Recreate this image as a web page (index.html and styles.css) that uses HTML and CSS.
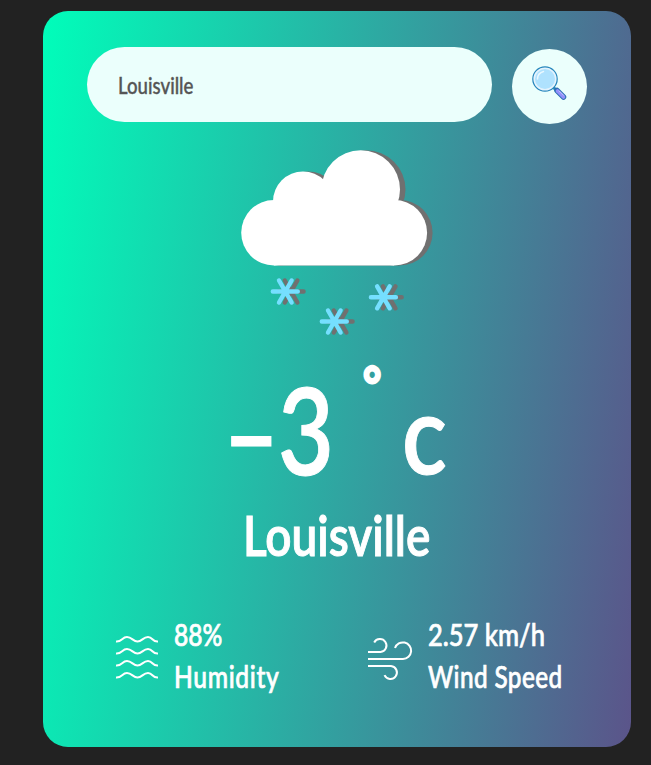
FILE: index.html
```html
<!DOCTYPE html>
<html lang="en">
<head>
<meta charset="utf-8">
<title>Weather</title>
<link rel="stylesheet" href="styles.css">
</head>
<body>
<main class="card">
  <div class="search">
    <div class="field"><span class="field-text">Louisville</span></div>
    <button class="search-btn" aria-label="Search">
      <svg width="36" height="36" viewBox="0 0 36 36">
        <path d="M21.500 22.500l3 3" stroke="#2584b8" stroke-width="3"/>
        <path d="M25 25.500l6.500 6.500" stroke="#2c6fb4" stroke-width="5.500" stroke-linecap="round"/>
        <path d="M25.500 26l6 6" stroke="#9290fa" stroke-width="3.600" stroke-linecap="round"/>
        <path d="M26.800 25.600l5 5" stroke="#c5c5ff" stroke-width="1"/>
        <circle cx="13" cy="14" r="12.200" fill="#e4f3fd" stroke="#2887bd" stroke-width="1.200"/>
        <circle cx="13" cy="14" r="10" fill="#afe2fe"/>
        <path d="M5.500 14a8 8 0 0 1 6-7.500" fill="none" stroke="#e9f8ff" stroke-width="1.500" stroke-linecap="round"/>
      </svg>
    </button>
  </div>

  <svg class="weather-icon" width="220" height="205" viewBox="230 140 220 205">
    <defs>
      <g id="cloud">
        <circle cx="274" cy="232.700" r="32.800"/>
        <circle cx="303" cy="201.500" r="30"/>
        <circle cx="360.700" cy="189.500" r="39.300"/>
        <circle cx="394.300" cy="232.700" r="32.800"/>
        <path d="M273 200h121v65.500H274z"/>
      </g>
      <path id="flake" d="M-12.500 0h25M-6.300-11L6.300 11M6.300-11L-6.300 11"/>
      <g id="flakes" fill="none" stroke-width="4.400" stroke-linecap="round">
        <use href="#flake" x="285.300" y="291.500"/>
        <use href="#flake" x="334.300" y="321.500"/>
        <use href="#flake" x="383.400" y="297.300"/>
      </g>
    </defs>
    <use href="#cloud" x="5.500" fill="#707070"/>
    <use href="#cloud" fill="#fff"/>
    <use href="#flakes" x="5.800" stroke="#707070"/>
    <use href="#flakes" stroke="#75dfff"/>
  </svg>

  <h1 class="temp"><span class="minus">–</span><span class="digit">3</span><span class="degree">°</span><span class="unit">c</span></h1>
  <h2 class="city"><span>Louisville</span></h2>

  <div class="details">
    <div class="stat humidity">
      <svg width="44" height="44" viewBox="0 0 44 44" fill="none" stroke="#fff" stroke-width="2">
        <path id="wave" d="M1 6.500C7 7 7 2 12 2s6 4.500 10.500 4.500S28 2 33 2s4 5 10 4.500"/>
        <use href="#wave" y="12"/><use href="#wave" y="24"/><use href="#wave" y="36"/>
      </svg>
      <div class="lines"><p><span class="t-hum">88%</span></p><p><span class="t-humidity">Humidity</span></p></div>
    </div>
    <div class="stat wind">
      <svg width="46" height="44" viewBox="0 0 46 44" fill="none" stroke="#fff" stroke-width="2">
        <path d="M1 15h12.500a6.500 6.500 0 1 0-6.300-9.500M1 22h35a8.300 8.300 0 1 0-8-11M1 29h23a6.500 6.500 0 1 1-6.500 9.200"/>
      </svg>
      <div class="lines"><p><span class="t-speed">2.57 km/h</span></p><p><span class="t-wind">Wind Speed</span></p></div>
    </div>
  </div>
</main>
</body>
</html>
```
FILE: styles.css
```css
* { box-sizing: border-box; margin: 0; padding: 0; }
body { background: #222; font-family: Lato, sans-serif; color: #fff; overflow: hidden; }
.card {
  width: 588px;
  height: 736px;
  margin: 11px 0 0 43px;
  padding: 36px 44px 0;
  border-radius: 25px;
  background: linear-gradient(97deg, #00feba, #5b548a);
}
.search { display: flex; gap: 20px; height: 77px; }
.field {
  width: 405px;
  height: 75px;
  padding-left: 31px;
  border-radius: 38px;
  background: #ebfffc;
  color: #555;
  font-size: 23px;
  font-weight: 500;
  line-height: 76px;
  -webkit-text-stroke: .4px;
}
.search-btn {
  display: grid;
  place-items: center;
  width: 75px;
  height: 75px;
  margin-top: 2px;
  padding-bottom: 7px;
  border: 0;
  border-radius: 50%;
  background: #ebfffc;
}
.weather-icon { display: block; margin: 16px 0 0 143px; }
span { display: inline-block; transform-origin: 0 50%; white-space: nowrap; }
.field-text { transform: scaleX(.81); }
.temp {
  display: flex;
  height: 140px;
  margin-top: 13px;
  padding-left: 136px;
  font-size: 122px;
  font-weight: 600;
  line-height: 140px;
  -webkit-text-stroke: 1px;
}
.temp span { flex: none; }
.minus { width: 55px; transform: translateY(3px) scaleX(.8); }
.digit { width: 85px; transform: scaleX(.79); }
.degree { width: 39px; font-size: 50px; line-height: 53px; transform: scaleX(.88); -webkit-text-stroke: 3px; }
.unit { font-size: 110px; line-height: 147px; transform: scaleX(.85); }
.city {
  height: 70px;
  margin-top: 1px;
  padding-left: 156px;
  font-size: 56px;
  font-weight: 600;
  line-height: 72px;
  -webkit-text-stroke: 1px;
}
.city span { transform: scaleX(.82); }
.details {
  display: grid;
  grid-template-columns: 252px 248px;
  margin-top: 45px;
  padding-left: 28px;
  font-size: 30px;
  font-weight: 500;
  line-height: 42px;
  -webkit-text-stroke: .7px;
}
.stat { display: flex; }
.stat svg { flex: none; margin-top: 21px; }
.wind svg { margin-top: 23px; }
.lines { width: 140px; margin: -1px 0 0 15px; }
.t-hum { transform: scaleX(.82); }
.t-humidity { letter-spacing: .8px; transform: scaleX(.82); }
.t-speed { transform: scaleX(.85); }
.t-wind { letter-spacing: .5px; transform: scaleX(.81); }
```
